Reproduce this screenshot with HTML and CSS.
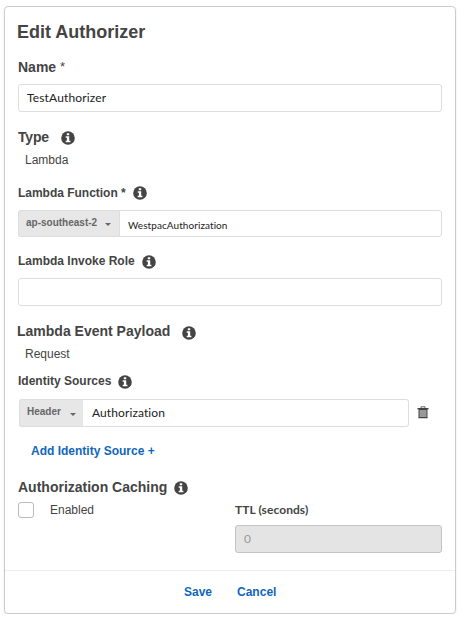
FILE: index.html
```html
<!DOCTYPE html>
<html lang="en">
<head>
<meta charset="utf-8">
<title>Edit Authorizer</title>
<link rel="stylesheet" href="styles.css">
</head>
<body>
<svg class="defs" width="0" height="0">
  <symbol id="info" viewBox="0 0 14 14">
    <circle cx="7" cy="7" r="6.8" fill="#444"/>
    <path fill="#fff" d="M5.8 2.2h2.4v2H5.8zM4.7 5.3h3.5v4.5h1.2v1.5H4.7V9.800h1.200V6.800H4.700z"/>
  </symbol>
</svg>
<form class="card">
  <div class="body">
    <h1 class="title"><span>Edit Authorizer</span></h1>
    <div class="row name"><b class="head t-name">Name</b><span class="star">*</span></div>
    <div class="input name-input"><span class="t-test">TestAuthorizer</span></div>

    <div class="row type"><b class="head t-type">Type</b><svg class="info"><use href="#info"/></svg></div>
    <div class="row value"><span class="t-lambda">Lambda</span></div>

    <div class="row function"><b class="label t-fn">Lambda Function *</b><svg class="info"><use href="#info"/></svg></div>
    <div class="group region">
      <div class="select"><b class="t-region">ap-southeast-2</b><i class="caret"></i></div>
      <div class="field"><span class="t-westpac">WestpacAuthorization</span></div>
    </div>

    <div class="row role"><b class="label t-role">Lambda Invoke Role</b><svg class="info low"><use href="#info"/></svg></div>
    <div class="input role-input"></div>

    <div class="row payload"><b class="head t-payload">Lambda Event Payload</b><svg class="info lower"><use href="#info"/></svg></div>
    <div class="row value request"><span class="t-request">Request</span></div>

    <div class="row sources"><b class="label t-sources">Identity Sources</b><svg class="info low"><use href="#info"/></svg></div>
    <div class="source-line">
      <div class="group header">
        <div class="select"><b class="t-header">Header</b><i class="caret"></i></div>
        <div class="field"><span class="t-auth">Authorization</span></div>
      </div>
      <svg class="trash" viewBox="0 0 12 13">
        <path d="M4 2V.8h4V2" fill="none" stroke="#666"/>
        <path d="M2 3.500h8v8H2z" fill="#999" stroke="#444"/>
        <path d="M.5 2h11v1.500H.5zM1.500 11h9v1.200h-9z" fill="#444"/>
      </svg>
    </div>
    <a class="add"><span class="t-add">Add Identity Source +</span></a>

    <div class="row caching"><b class="head t-caching">Authorization Caching</b><svg class="info low"><use href="#info"/></svg></div>
    <div class="cache-line">
      <i class="checkbox"></i>
      <span class="enabled">Enabled</span>
      <div class="ttl">
        <b class="ttl-label"><span class="t-ttl">TTL (seconds)</span></b>
        <div class="input disabled">0</div>
      </div>
    </div>
  </div>
  <div class="footer"><a class="save">Save</a><a class="cancel">Cancel</a></div>
</form>
</body>
</html>
```
FILE: styles.css
```css
* { box-sizing: border-box; }
body {
  margin: 0;
  padding: 6px 0 0 4px;
  background: #fff;
  color: #444;
  font: 12px/20px "Liberation Sans", Arial, sans-serif;
  white-space: nowrap;
}
.defs { position: absolute; }
.card {
  display: flex;
  flex-direction: column;
  width: 452px;
  height: 608px;
  border: 1px solid #ccc;
  border-radius: 4px;
  box-shadow: 0 1px 2px rgba(0, 0, 0, .12);
}
.body { height: 563px; padding: 13px 13px 0 13px; }
.title { margin: 0 0 0 -1px; font-size: 18px; line-height: 24px; }
.row { display: flex; align-items: center; height: 20px; }
.head { font-size: 14px; }
.label { font-size: 12px; }
.info { width: 14px; height: 14px; flex: none; }
.low { margin-top: 2px; }
.lower { margin-top: 4px; }
.name { margin-top: 13px; }
.t-name { width: 42px; }
.star { font-size: 13px; }
.input {
  display: flex;
  align-items: center;
  height: 28px;
  padding-left: 8px;
  border: 1px solid #ddd;
  border-radius: 3px;
  color: #222;
  font-family: Lato, sans-serif;
  font-size: 12px;
}
.name-input { margin-top: 7px; }
.t-test { letter-spacing: .15px; }
.type { margin-top: 16px; }
.t-type { width: 43px; margin-top: -2px; letter-spacing: -.2px; }
.value { margin-top: 2px; padding-left: 7px; }
.function { margin-top: 13px; }
.t-fn { width: 115px; letter-spacing: -.02px; }
.group { display: flex; }
.region { height: 27px; margin-top: 7px; }
.select {
  display: flex;
  align-items: center;
  width: 101px;
  padding: 0 8px 2px 7px;
  border: 1px solid #ddd;
  border-right: 0;
  border-radius: 3px 0 0 3px;
  background: #e7e7e7;
  color: #666;
  font-size: 10px;
}
.caret {
  margin: 4px 0 0 auto;
  border: 3px solid transparent;
  border-top-color: #666;
  border-bottom: 0;
}
.field {
  display: flex;
  flex: 1;
  align-items: center;
  padding-left: 8px;
  border: 1px solid #ddd;
  border-radius: 0 3px 3px 0;
  color: #222;
  font-family: Lato, sans-serif;
}
.t-westpac { font-size: 10px; padding-top: 2px; letter-spacing: .07px; }
.role { margin-top: 14px; }
.t-role { width: 124px; }
.role-input { margin-top: 7px; }
.payload { margin-top: 15px; }
.t-payload { width: 165px; margin-left: -1px; }
.request { margin-top: 3px; }
.sources { margin-top: 7px; }
.t-sources { width: 100px; }
.source-line { display: flex; align-items: center; margin-top: 8px; }
.header { width: 390px; height: 28px; margin-left: 1px; }
.header .select { width: 64px; padding-right: 7px; }
.header .field { border-left: 0; padding-left: 9px; }
.t-auth { letter-spacing: .1px; }
.trash { width: 12px; height: 13px; margin-left: 8px; margin-top: -1px; }
.add { display: block; width: max-content; margin: 14px 0 0 13px; color: #1166bb; font-weight: bold; }
.caching { margin-top: 16px; }
.t-caching { width: 156px; }
.cache-line { display: flex; }
.checkbox { width: 16px; height: 16px; margin-top: 5px; border: 1px solid #bbb; border-radius: 3px; }
.enabled { width: 185px; margin: 3px 0 0 16px; }
.ttl { width: 207px; margin-top: 3px; }
.ttl-label { display: block; font-family: Lato, sans-serif; letter-spacing: .07px; }
.disabled { margin-top: 5px; border-color: #c4c4c4; background: #e4e4e4; color: #999; }
.footer {
  display: flex;
  flex: 1;
  align-items: center;
  gap: 25px;
  padding-left: 179px;
  border-top: 1px solid #eee;
  color: #1166bb;
  font-weight: bold;
}
```
